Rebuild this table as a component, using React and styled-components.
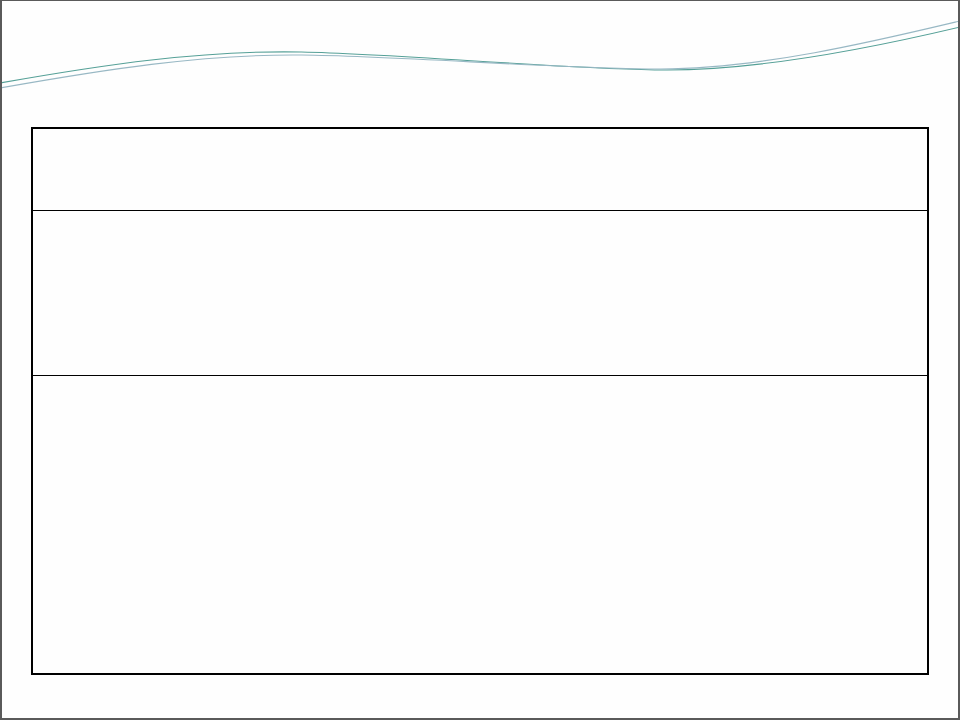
import React from 'react';
import styled, { createGlobalStyle } from 'styled-components';

const GlobalStyle = createGlobalStyle`
  html, body {
    margin: 0;
    padding: 0;
    background: #ffffff;
    font-family: "Liberation Sans", Arial, sans-serif;
  }
`;

const rows = [81, 164, 297];

// two thin strands that swap places along the slide top
const Wave = () => (
  <WaveSvg viewBox="0 0 958 126" preserveAspectRatio="none">
    <path
      d="M-2,82 C100,64 200,49 300,51 S560,68 660,69 S880,45 960,26"
      fill="none"
      stroke="#55a097"
      strokeWidth="1.1"
    />
    <path
      d="M-2,87 C100,69 200,53 300,54 S560,68 660,68 S880,39 960,20"
      fill="none"
      stroke="#98b8c4"
      strokeWidth="1.1"
    />
  </WaveSvg>
);

const App = () => {
  return (
    <>
      <GlobalStyle />
      <Slide>
        <Header>
          <Wave />
        </Header>
        <Body>
          <Table>
            {rows.map((h, i) => (
              <Row key={i} $height={h} $first={i === 0} />
            ))}
          </Table>
        </Body>
      </Slide>
    </>
  );
};

const Slide = styled.div`
  width: 960px;
  height: 720px;
  box-sizing: border-box;
  background: #fefefe;
  border-style: solid;
  border-color: #5a5a5a;
  border-width: 1px 2px 2px 2px;
  display: flex;
  flex-direction: column;
  overflow: hidden;
`;

const Header = styled.div`
  height: 126px;
  flex-shrink: 0;
`;

const WaveSvg = styled.svg`
  display: block;
  width: 100%;
  height: 100%;
`;

const Body = styled.div`
  padding: 0 29px;
`;

const Table = styled.div`
  display: flex;
  flex-direction: column;
  border: 2px solid #000;
  width: 898px;
  box-sizing: border-box;
`;

const Row = styled.div`
  height: ${(p) => p.$height}px;
  border-top: ${(p) => (p.$first ? 'none' : '1px solid #000')};
`;

export default App;
